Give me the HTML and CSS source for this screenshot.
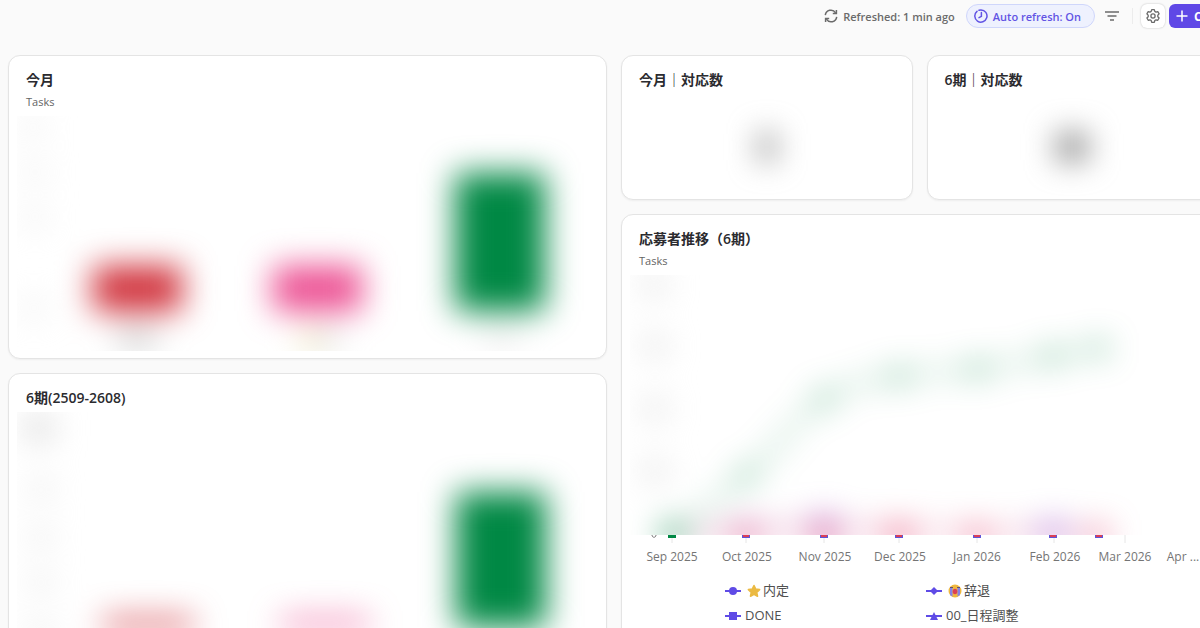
FILE: index.html
```
<!DOCTYPE html>
<html lang="ja">
<head>
    <meta charset="UTF-8">
    <meta name="viewport" content="width=device-width, initial-scale=1.0">
    <title>Dashboard</title>
    <link rel="stylesheet" href="styles.css">
</head>
<body>
    <div class="page">
        <header class="toolbar">
            <button class="refresh" type="button">
                <svg width="14" height="14" viewBox="0 0 14 14" fill="none" stroke="currentColor" stroke-width="1.5">
                    <path d="M1.3 6.2A5.6 5.6 0 0 1 11.6 3.8M12.7 7.8A5.6 5.6 0 0 1 2.4 10.2"/>
                    <path d="M12.4 1v3.6H8.8M1.6 13V9.4h3.6"/>
                </svg>
                Refreshed: 1 min ago
            </button>
            <button class="auto-refresh" type="button">
                <svg width="14" height="14" viewBox="0 0 14 14" fill="none" stroke="currentColor" stroke-width="1.5" stroke-linecap="round">
                    <path d="M3 2.300A6.100 6.100 0 1 0 7 .9a6.100 6.100 0 0 0-2 .3"/>
                    <path d="M7.400 3.600v3.700L5 8.600"/>
                </svg>
                Auto refresh: On
            </button>
            <button class="filter" type="button" aria-label="Filter">
                <svg width="14" height="12" viewBox="0 0 14 12" stroke="currentColor" stroke-width="1.6">
                    <path d="M0 2h14M2.500 6h9M5 10h4"/>
                </svg>
            </button>
            <span class="divider"></span>
            <button class="settings" type="button" aria-label="Settings">
                <svg width="14" height="14" viewBox="0 0 14 14" fill="none" stroke="currentColor" stroke-width="1.3" stroke-linejoin="round">
                    <path d="M5.7.7h2.6l.5 1.7 1.2.7 1.8-.5 1.3 2.3L11.8 6.200v1.500l1.300 1.300-1.300 2.300-1.800-.5-1.200.7-.5 1.800H5.700l-.5-1.800-1.200-.7-1.800.5L.9 9l1.300-1.300V6.200L.9 4.900l1.300-2.300 1.800.5 1.200-.7z"/>
                    <circle cx="7" cy="7" r="2.100"/>
                </svg>
            </button>
            <button class="add-card" type="button">
                <svg width="12" height="12" viewBox="0 0 12 12" stroke="currentColor" stroke-width="1.5">
                    <path d="M6 .5v11M.5 6h11"/>
                </svg>
                Card
            </button>
        </header>

        <main class="dashboard">
            <div class="column">
                <section class="card">
                    <div class="card-header">
                        <h2>今月</h2>
                        <p>Tasks</p>
                    </div>
                    <div class="chart">
                        <svg viewBox="0 0 581 242">
                            <defs>
                                <filter id="blur" filterUnits="userSpaceOnUse" x="-50" y="-50" width="700" height="400" color-interpolation-filters="sRGB">
                                    <feGaussianBlur stdDeviation="16"/>
                                </filter>
                            </defs>
                            <svg width="581" height="235">
                                <g filter="url(#blur)">
                                    <g fill="#ebebeb">
                                        <circle cx="16" cy="10" r="10"/>
                                        <circle cx="18" cy="56" r="10"/>
                                        <circle cx="18" cy="102" r="10"/>
                                        <circle cx="17" cy="192" r="10"/>
                                    </g>
                                    <rect x="76" y="150" width="89" height="45" fill="#d0303a"/>
                                    <rect x="256" y="150" width="89" height="45" fill="#ec4f92"/>
                                    <rect x="438" y="57" width="90" height="138" fill="#008844"/>
                                    <rect x="102" y="217" width="36" height="10" fill="#999999"/>
                                    <rect x="286" y="217" width="14" height="12" fill="#e8d270"/>
                                    <rect x="300" y="217" width="20" height="10" fill="#bbbbbb"/>
                                    <rect x="470" y="217" width="30" height="8" fill="#cccccc"/>
                                </g>
                            </svg>
                        </svg>
                    </div>
                </section>

                <section class="card">
                    <div class="card-header">
                        <h2>6期(2509-2608)</h2>
                    </div>
                    <div class="chart">
                        <svg viewBox="0 0 581 260">
                            <g filter="url(#blur)">
                                <rect x="9" y="4" width="26" height="24" fill="#d8d8d8"/>
                                <g fill="#e4e4e4">
                                    <circle cx="24" cy="77" r="10"/>
                                    <circle cx="24" cy="125" r="10"/>
                                    <circle cx="24" cy="171" r="10"/>
                                    <circle cx="24" cy="219" r="10"/>
                                </g>
                                <rect x="86" y="207" width="90" height="11" fill="#d0303a"/>
                                <rect x="264" y="207" width="88" height="9" fill="#ec4f92"/>
                                <rect x="439" y="80" width="90" height="135" fill="#008844"/>
                            </g>
                        </svg>
                    </div>
                </section>
            </div>

            <div class="column">
                <div class="kpis">
                    <section class="card">
                        <div class="card-header">
                            <h2>今月｜対応数</h2>
                        </div>
                        <div class="kpi"><span class="value"></span></div>
                    </section>
                    <section class="card">
                        <div class="card-header">
                            <h2>6期｜対応数</h2>
                        </div>
                        <div class="kpi"><span class="value wide"></span></div>
                    </section>
                </div>

                <section class="card">
                    <div class="card-header">
                        <h2>応募者推移（6期）</h2>
                        <p>Tasks</p>
                    </div>
                    <div class="chart">
                        <svg viewBox="0 0 581 296">
                            <!-- plot area -->
                            <svg width="581" height="260">
                                <g filter="url(#blur)">
                                    <g fill="#dedede">
                                        <circle cx="24" cy="10" r="11"/>
                                        <circle cx="25" cy="71" r="11"/>
                                        <circle cx="25" cy="134" r="11"/>
                                        <circle cx="25" cy="196" r="11"/>
                                    </g>
                                    <path d="M42 261C66 245 92 219 116 201S168 140 194 124 242 105 269 101 320 97 347 94 395 86 423 81L470 73" fill="none" stroke="#008844" stroke-width="2"/>
                                    <g fill="#008844">
                                        <path d="M33 251h18v16H33z"/>
                                        <path d="M111 196h10v10h-10zM189 119h10v10h-10zM264 96h10v10h-10zM342 89h10v10h-10zM418 76h10v10h-10zM465 68h10v10h-10z"/>
                                    </g>
                                    <path d="M60 260L116 254 194 250 269 256 347 259 423 255 470 259" fill="none" stroke="#a56fd0" stroke-width="2"/>
                                    <path d="M60 262L116 257 194 256 269 255 347 258 423 260 470 259" fill="none" stroke="#e8547c" stroke-width="3"/>
                                    <g fill="#e8547c">
                                        <path d="M107 254h18v16h-18zM184 254h20v16h-20zM258 251h22v18h-22zM338 253h18v16h-18zM462 253h14v16h-14z"/>
                                    </g>
                                    <path d="M186 242h16v12h-16zM414 249h18v16h-18zM110 248h12v6h-12z" fill="#a45fd6"/>
                                </g>
                            </svg>

                            <!-- markers on the base line -->
                            <path d="M22 260c0 3 4 3 4 0" fill="none" stroke="#777777"/>
                            <path d="M38 260h8v3h-8z" fill="#008844"/>
                            <path d="M112 260h8v3h-8zM190 260h8v3h-8zM265 260h8v3h-8zM343 260h8v3h-8zM419 260h8v3h-8zM465 260h8v3h-8z" fill="#5f55d8"/>
                            <path d="M113 260h6v2h-6zM191 260h6v2h-6zM266 260h6v2h-6zM344 260h6v2h-6zM420 260h6v2h-6zM466 260h6v2h-6z" fill="#d93f58"/>
                            <path d="M42 263v5M116 263v5M194 263v5M269 263v5M347 263v5M424 263v5M495 260v8" stroke="#e6e6e6"/>

                            <g class="axis">
                                <text x="42" y="286">Sep 2025</text>
                                <text x="117" y="286">Oct 2025</text>
                                <text x="195" y="286">Nov 2025</text>
                                <text x="270" y="286">Dec 2025</text>
                                <text x="347" y="286">Jan 2026</text>
                                <text x="425" y="286">Feb 2026</text>
                                <text x="495" y="286">Mar 2026</text>
                                <text x="553" y="286">Apr ...</text>
                            </g>
                        </svg>
                    </div>
                    <ul class="legend">
                        <li>
                            <svg width="16" height="10" viewBox="0 0 16 10"><path d="M0 4h16v2H0z"/><circle cx="8" cy="5" r="4"/></svg>
                            <span>
                                <svg class="emoji" width="14" height="14" viewBox="0 0 14 14"><path d="M7 1.500l1.700 3.600 3.900.5-2.900 2.700.8 3.900L7 10.300l-3.500 1.900.8-3.900L1.400 5.600l3.900-.5z" fill="#ebba43" stroke="#ebba43" stroke-width="1.600" stroke-linejoin="round"/></svg>
                                内定
                            </span>
                        </li>
                        <li>
                            <svg width="16" height="10" viewBox="0 0 16 10"><path d="M0 4h16v2H0z"/><path d="M8 1l4 4-4 4-4-4z"/></svg>
                            <span>
                                <svg class="emoji" width="14" height="14" viewBox="0 0 14 14">
                                    <circle cx="7" cy="7" r="6.500" fill="#efb83f"/>
                                    <path d="M2 4h2.500v8.500L2 11zM9.500 4H12v7l-2.500 1.500z" fill="#8583e8"/>
                                    <path d="M2 3.500h3M9 3.500h3" stroke="#63506b"/>
                                    <ellipse cx="7" cy="7.500" rx="2.300" ry="2.800" fill="#dc4055"/>
                                </svg>
                                辞退
                            </span>
                        </li>
                        <li>
                            <svg width="16" height="10" viewBox="0 0 16 10"><path d="M0 4h16v2H0z"/><path d="M4 1h8v8H4z"/></svg>
                            <span>DONE</span>
                        </li>
                        <li>
                            <svg width="16" height="10" viewBox="0 0 16 10"><path d="M0 4h16v2H0z"/><path d="M8 1l4 8H4z"/></svg>
                            <span>00_日程調整</span>
                        </li>
                    </ul>
                </section>
            </div>
        </main>
    </div>
</body>
</html>
```
FILE: styles.css
```
* {
    box-sizing: border-box;
}

body {
    font-family: "Open Sans", "Noto Sans CJK JP", sans-serif;
    font-size: 11px;
    margin: 0;
    height: 100vh;
    overflow: hidden;
    background-color: #fafafa;
    color: #2b2b2f;
}

/* the board runs a little past the right edge of the window */
.page {
    width: calc(100% + 28px);
}

.toolbar {
    display: flex;
    align-items: center;
    justify-content: flex-end;
    height: 32px;
}

button {
    display: flex;
    align-items: center;
    height: 24px;
    padding: 0;
    border: none;
    background: none;
    font-family: inherit;
    font-size: 11px;
    font-weight: 600;
    color: #6b6b6b;
    white-space: nowrap;
    cursor: pointer;
}

.refresh {
    gap: 5px;
    margin-right: 11px;
}

.auto-refresh {
    gap: 5px;
    padding: 0 13px 0 7px;
    border: 1px solid #cfd6fb;
    border-radius: 12px;
    background-color: #eef1fe;
    color: #6254e4;
}

.filter {
    margin: 0 13px 0 10px;
}

.divider {
    width: 1px;
    height: 16px;
    background-color: #ececec;
    margin-right: 8px;
}

.settings {
    justify-content: center;
    width: 24px;
    border-radius: 6px;
    background-color: white;
    box-shadow: 0 0 2px rgba(0,0,0,0.25);
    margin-right: 4px;
}

.add-card {
    gap: 6px;
    width: 59px;
    padding-left: 7px;
    border-radius: 6px;
    background-color: #5f48e6;
    color: white;
    font-size: 12px;
    font-weight: 700;
}

.dashboard {
    display: grid;
    grid-template-columns: 1fr 1fr;
    gap: 14px;
    align-items: start;
    padding: 23px 8px 8px;
}

.column {
    display: grid;
    gap: 14px;
}

.kpis {
    display: grid;
    grid-template-columns: 1fr 1fr;
    gap: 14px;
    padding-right: 2px;
}

.card {
    background-color: white;
    border: 1px solid #e4e4e4;
    border-radius: 12px;
    box-shadow: 0 1px 2px rgba(0,0,0,0.05);
}

.card-header {
    padding: 14px 17px 4px;
}

.card-header h2 {
    margin: 0;
    font-size: 14px;
    font-weight: 600;
    line-height: 20px;
}

.card-header p {
    margin: 2px 0 0;
    line-height: 20px;
    color: #646464;
}

.chart {
    padding: 0 8px;
}

.chart svg {
    display: block;
}

.axis text {
    font-size: 12px;
    fill: #757575;
    text-anchor: middle;
}

.kpi {
    display: flex;
    align-items: center;
    justify-content: center;
    height: 105px;
}

.value {
    width: 16px;
    height: 28px;
    background-color: #909090;
    filter: blur(15px);
}

.value.wide {
    width: 32px;
    height: 28px;
}

.legend {
    display: grid;
    grid-template-columns: 201px 190px;
    justify-content: center;
    margin: 0;
    padding: 7px 0 16px;
    list-style: none;
    font-size: 13px;
    line-height: 25px;
    color: #505050;
}

.legend li {
    display: flex;
    align-items: center;
    gap: 4px;
}

.legend li > svg {
    fill: #5f4be6;
}

.legend span {
    display: flex;
    align-items: center;
    gap: 2px;
}

.emoji {
    margin-left: 2px;
}
```
